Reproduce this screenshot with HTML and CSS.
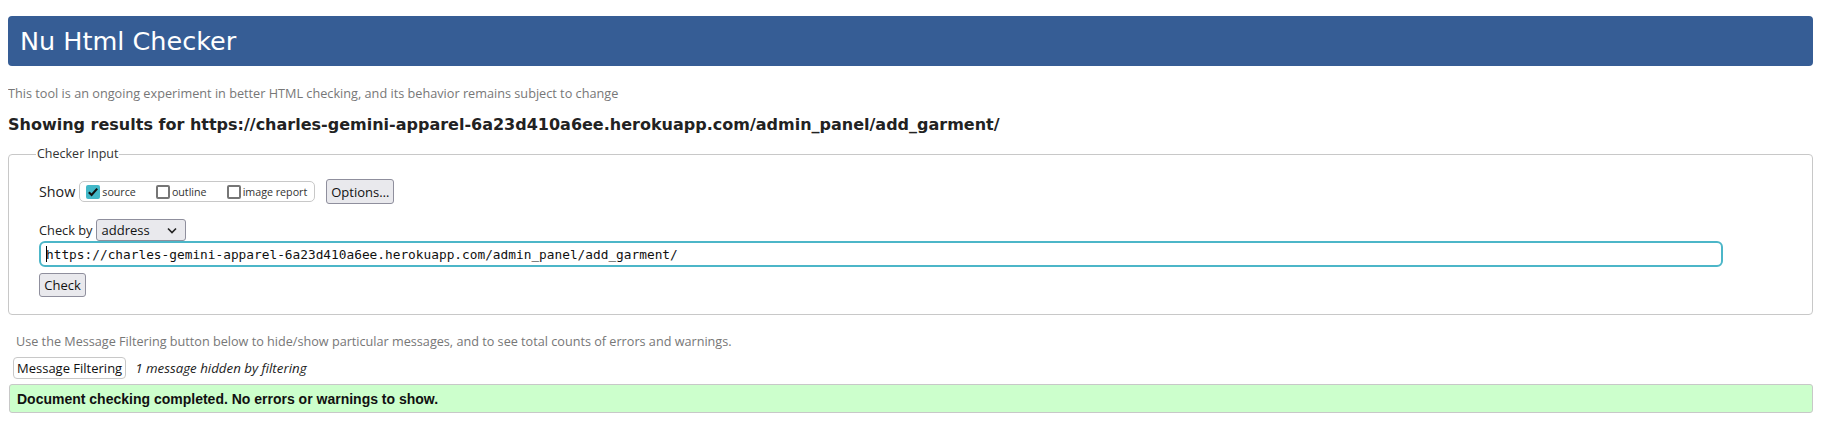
FILE: index.html
```html
<!DOCTYPE html>
<html lang="en">
<head>
<meta charset="utf-8">
<title>Nu Html Checker</title>
<link rel="stylesheet" href="styles.css">
</head>
<body>
<h1 class="title">Nu Html Checker</h1>
<p class="intro">This tool is an ongoing experiment in better HTML checking, and its behavior remains subject to change</p>
<p class="results-for">Showing results for https://charles-gemini-apparel-6a23d410a6ee.herokuapp.com/admin_panel/add_garment/</p>
<fieldset class="checker">
  <legend class="checker-legend">Checker Input</legend>
  <div class="show-row">
    <span class="row-label row-label-show">Show</span>
    <span class="show-opts">
      <span class="opt"><span class="cb cb-checked"><svg width="14" height="14" viewBox="0 0 14 14"><path d="M2.8 7.2 L5.6 10 L11.2 3.6" fill="none" stroke="#111" stroke-width="2.1"/></svg></span>source</span>
      <span class="opt"><span class="cb"></span>outline</span>
      <span class="opt"><span class="cb"></span>image report</span>
    </span>
    <span class="btn btn-options">Options…</span>
  </div>
  <div class="checkby-row">
    <span class="row-label">Check by</span>
    <span class="select">address<svg class="chev" width="10" height="7" viewBox="0 0 10 7"><path d="M1 1.5 L5 5.5 L9 1.5" fill="none" stroke="#222" stroke-width="1.6"/></svg></span>
  </div>
  <div class="url-input"><span class="caret"></span>https://charles-gemini-apparel-6a23d410a6ee.herokuapp.com/admin_panel/add_garment/</div>
  <div class="check-row"><span class="btn btn-check">Check</span></div>
</fieldset>
<p class="hint">Use the Message Filtering button below to hide/show particular messages, and to see total counts of errors and warnings.</p>
<div class="filter-row">
  <span class="btn-filter">Message Filtering</span>
  <span class="hidden-note">1 message hidden by filtering</span>
</div>
<div class="success">Document checking completed. No errors or warnings to show.</div>
</body>
</html>
```
FILE: styles.css
```css
html, body {
  background: #fff;
}
body {
  margin: 8px;
  font-family: "Open Sans", "Noto Sans", sans-serif;
  color: #222;
}
.title {
  margin: 8px 0 0 0;
  height: 50px;
  box-sizing: border-box;
  padding: 0 0 0 12px;
  display: flex;
  align-items: center;
  background: #365d95;
  color: #fff;
  border-radius: 4px;
  font-family: "DejaVu Sans", sans-serif;
  font-weight: normal;
  font-size: 25.5px;
}
.intro {
  margin: 18px 0 0 0;
  font-size: 12.7px;
  line-height: 18px;
  color: #777;
}
.results-for {
  margin: 13px 0 0 0;
  font-family: "DejaVu Sans", sans-serif;
  font-weight: bold;
  font-size: 16px;
  line-height: 20px;
  color: #222;
}
.checker {
  margin: 10px 0 0 0;
  padding: 0 0 17px 30px;
  border: 1px solid #c8c8c8;
  border-radius: 4px;
  min-width: 0;
}
.checker-legend {
  margin-left: -3px;
  padding: 0 1px;
  font-size: 12.5px;
  line-height: 18px;
  color: #333;
}
.show-row {
  margin-top: 16px;
  display: flex;
  align-items: center;
  height: 25px;
}
.row-label {
  font-size: 12.8px;
  color: #222;
}
.row-label-show {
  font-size: 14.3px;
}
.show-opts {
  margin-left: 4px;
  display: flex;
  align-items: center;
  height: 21px;
  box-sizing: border-box;
  border: 1px solid #c8c8c8;
  border-radius: 5px;
  padding: 0 7px 0 6px;
  gap: 20px;
  font-size: 10.7px;
  color: #333;
}
.opt {
  display: flex;
  align-items: center;
}
.cb {
  width: 14px;
  height: 14px;
  box-sizing: border-box;
  border: 2px solid #767676;
  border-radius: 2px;
  margin-right: 2px;
  display: inline-block;
}
.cb-checked {
  border: none;
  background: #43b8c8;
}
.cb-checked svg {
  display: block;
}
.btn {
  display: inline-flex;
  align-items: center;
  justify-content: center;
  box-sizing: border-box;
  background: #e9e9ed;
  border: 1px solid #8f8f9d;
  border-radius: 3px;
  font-size: 13px;
  color: #111;
}
.btn-options {
  margin-left: 11px;
  width: 68px;
  height: 25px;
}
.checkby-row {
  margin-top: 15px;
  display: flex;
  align-items: center;
  height: 22px;
}
.select {
  margin-left: 3px;
  width: 90px;
  height: 22px;
  box-sizing: border-box;
  display: inline-flex;
  align-items: center;
  justify-content: space-between;
  padding: 0 8px 0 5px;
  background: #e9e9ed;
  border: 1px solid #8f8f9d;
  border-radius: 3px;
  font-size: 13px;
  color: #111;
}
.url-input {
  width: 1684px;
  height: 26px;
  box-sizing: border-box;
  border: 2px solid #4cb6c8;
  border-radius: 6px;
  padding: 0 0 0 5px;
  display: flex;
  align-items: center;
  font-family: "DejaVu Sans Mono", monospace;
  font-size: 12.8px;
  color: #111;
}
.caret {
  width: 1px;
  height: 16px;
  background: #000;
  margin-right: -1px;
}
.check-row {
  margin-top: 6px;
  display: flex;
}
.btn-check {
  width: 47px;
  height: 24px;
  font-size: 13px;
}
.hint {
  margin: 17px 0 0 8px;
  font-size: 12.65px;
  line-height: 18px;
  color: #777;
}
.filter-row {
  margin-top: 7px;
  display: flex;
  align-items: center;
  height: 22px;
  margin-left: 5px;
}
.btn-filter {
  display: inline-flex;
  align-items: center;
  height: 22px;
  box-sizing: border-box;
  padding: 0 3px;
  border: 1px solid #c8c8c8;
  border-radius: 4px;
  background: #fff;
  font-size: 13px;
  color: #111;
}
.hidden-note {
  margin-left: 9px;
  font-style: italic;
  font-size: 13.3px;
  color: #222;
}
.success {
  margin-top: 5px;
  margin-left: 1px;
  height: 29px;
  box-sizing: border-box;
  display: flex;
  align-items: center;
  padding-left: 7px;
  background: #ccffcc;
  border: 1px solid #c8c8c8;
  border-radius: 3px;
  font-family: "Liberation Sans", Arial, sans-serif;
  font-weight: bold;
  font-size: 14px;
  color: #111;
}
```
